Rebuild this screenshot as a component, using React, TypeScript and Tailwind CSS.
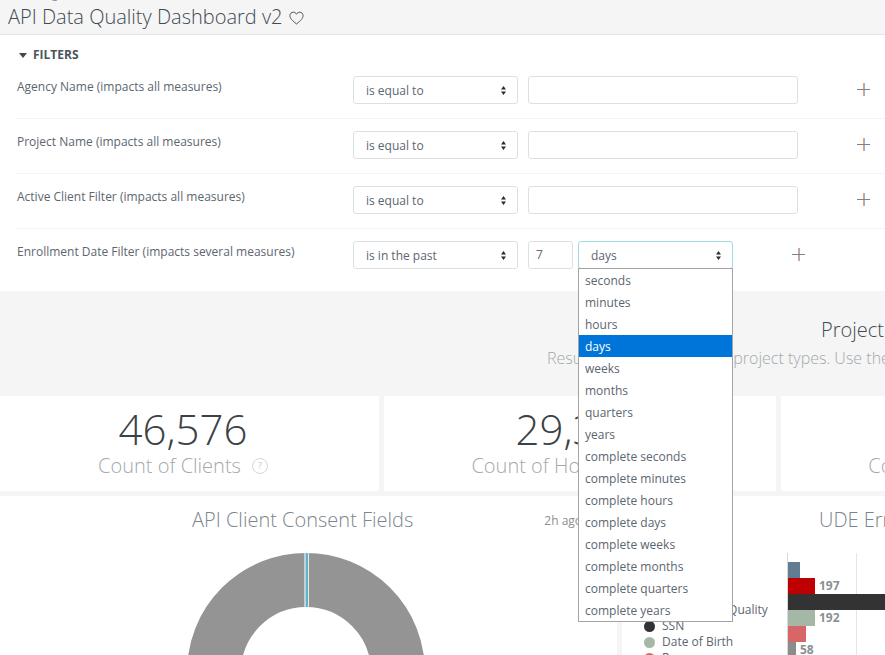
const units = [
  "seconds",
  "minutes",
  "hours",
  "days",
  "weeks",
  "months",
  "quarters",
  "years",
  "complete seconds",
  "complete minutes",
  "complete hours",
  "complete days",
  "complete weeks",
  "complete months",
  "complete quarters",
  "complete years",
];

function Carets() {
  return (
    <svg width="5" height="9" viewBox="0 0 5 9" className="shrink-0 text-[#262d33]">
      <path d="M2.5 0 L5 3.5 L0 3.5 Z M2.5 9 L5 5.5 L0 5.5 Z" fill="currentColor" />
    </svg>
  );
}

function PlusIcon() {
  return (
    <svg width="13" height="13" viewBox="0 0 13 13" className="block">
      <rect x="6" y="0" width="1" height="13" fill="#e9a077" />
      <rect x="7" y="0" width="1" height="13" fill="#93b4d8" />
      <rect x="0" y="6" width="13" height="1" fill="#7d8288" />
    </svg>
  );
}

function SelectBox({ label, className }: { label: string; className: string }) {
  return (
    <div className={`h-7 flex items-center justify-between pl-3 pr-[11px] bg-white rounded-[3px] border text-xs text-[#5c6670] ${className}`}>
      <span className="mt-[1px]">{label}</span>
      <Carets />
    </div>
  );
}

function FilterRow({ label }: { label: string }) {
  return (
    <div className="h-[55px] ml-[15px] pt-[12px] flex border-b border-[#f2f3f4]">
      <div className="w-[338px] pl-[2px] pt-[3px] text-xs leading-4 text-[#5c6670]">{label}</div>
      <SelectBox label="is equal to" className="w-[165px] border-[#dedfe0]" />
      <div className="w-[270px] h-7 ml-[10px] bg-white rounded-[3px] border border-[#dedfe0]" />
      <div className="ml-[59px] pt-[7px]">
        <PlusIcon />
      </div>
    </div>
  );
}

function KpiTile({ value, label }: { value: string; label: string }) {
  return (
    <div className="h-[95px] w-[392px] bg-white shrink-0 flex flex-col items-center pt-[6px]">
      <div className="text-[42px] leading-[54px] font-light text-[#3a4245]">{value}</div>
      <div className="-mt-[4px] flex items-center gap-[11px] text-xl leading-[27px] font-light text-[#a3a9ad]">
        <span>{label}</span>
        <span className="w-4 h-4 rounded-full border border-[#d3d6d8] flex items-center justify-center text-[9px] font-normal text-[#c4c8cb]">
          ?
        </span>
      </div>
    </div>
  );
}

function LegendItem({ label, color }: { label: string; color: string }) {
  return (
    <div className="h-4 flex items-center gap-[7px] text-xs text-[#5c6670] whitespace-nowrap">
      <span className={`w-[11px] h-[11px] rounded-full shrink-0 ${color}`} />
      {label}
    </div>
  );
}

function Bar({ width, color, value }: { width: string; color: string; value?: string }) {
  return (
    <div className="h-4 flex items-center">
      <div className={`h-4 shrink-0 ${width} ${color}`} />
      {value && <span className="ml-[4px] text-xs font-bold text-[#8a9094]">{value}</span>}
    </div>
  );
}

export default function App() {
  return (
    <div className="relative w-[885px] h-[655px] overflow-hidden bg-[#f5f5f5] font-['Open_Sans',sans-serif]">
      <header className="h-[35px] overflow-hidden border-b border-[#e4e5e6] flex flex-col justify-end pl-2">
        <div className="pl-[3px] text-xs leading-4 text-[#8a9094] shrink-0">Tracking</div>
        <div className="flex items-center gap-[6px] h-[30px] mb-[2px] shrink-0 text-xl font-light text-[#3f4a52]">
          API Data Quality Dashboard v2
          <svg width="15" height="14" viewBox="0 0 24 22" className="mt-[1px]">
            <path
              d="M12 20.5 C5 15 1.5 11.5 1.5 7.2 C1.5 4 4 1.7 6.9 1.7 C9 1.7 11 2.9 12 5 C13 2.9 15 1.7 17.1 1.7 C20 1.7 22.5 4 22.5 7.2 C22.5 11.5 19 15 12 20.5 Z"
              fill="none"
              stroke="currentColor"
              strokeWidth="1.5"
            />
          </svg>
        </div>
      </header>

      <section className="h-[256px] bg-white">
        <div className="h-[29px] pb-[1px] flex items-end pl-[19px] gap-[6px]">
          <svg width="8" height="5" viewBox="0 0 8 5" className="mb-[5px] text-[#3f4a52]">
            <path d="M0 0 H8 L4 5 Z" fill="currentColor" />
          </svg>
          <span className="text-xs leading-4 font-bold text-[#4a545c]">FILTERS</span>
        </div>
        <FilterRow label="Agency Name (impacts all measures)" />
        <FilterRow label="Project Name (impacts all measures)" />
        <FilterRow label="Active Client Filter (impacts all measures)" />
        <div className="ml-[15px] pt-[12px] flex">
          <div className="w-[338px] pl-[2px] pt-[3px] text-xs leading-4 text-[#5c6670]">
            Enrollment Date Filter (impacts several measures)
          </div>
          <SelectBox label="is in the past" className="w-[165px] border-[#dedfe0]" />
          <div className="w-[45px] h-7 ml-[10px] pl-[7px] flex items-center bg-white rounded-[3px] border border-[#dedfe0] text-xs text-[#5c6670]">
            7
          </div>
          <SelectBox label="days" className="w-[155px] ml-[5px] border-[#9fdbe3]" />
          <div className="ml-[59px] pt-[7px]">
            <PlusIcon />
          </div>
        </div>
      </section>

      <section className="h-[105px] pt-[25px] whitespace-nowrap">
        <div className="pl-[821px] text-xl leading-[27px] font-light text-[#3f4a52]">Project Overview</div>
        <div className="pl-[547px] mt-[4px] text-base leading-[22px] font-light text-[#a3a9ad]">
          Results from the selected project types. Use the filters
        </div>
      </section>

      <div className="flex gap-[5px] w-[1300px] -ml-[13px]">
        <KpiTile value="46,576" label="Count of Clients" />
        <KpiTile value="29,310" label="Count of Households" />
        <KpiTile value="18,204" label="Count of Enrollments" />
      </div>

      <div className="flex gap-[5px] mt-[5px] w-[1200px]">
        <div className="w-[617px] h-[200px] shrink-0 bg-white overflow-hidden">
          <div className="h-[50px] pl-[192px] pt-[10px] flex whitespace-nowrap">
            <span className="text-xl leading-[27px] font-light text-[#7c858c]">API Client Consent Fields</span>
            <span className="ml-[131px] mt-[7px] text-xs leading-4 text-[#8a9094]">2h ago</span>
          </div>
          <svg width="240" height="150" viewBox="0 0 240 150" className="ml-[186px] mt-[7px]">
            <circle cx="120" cy="119" r="92" fill="none" stroke="#949494" strokeWidth="54" />
            <rect x="119" y="0" width="3" height="54" fill="#62b2c9" />
            <rect x="118.5" y="0" width="1" height="54" fill="#ffffff" />
            <rect x="122" y="0" width="0.8" height="54" fill="#ffffff" />
          </svg>
        </div>
        <div className="w-[500px] h-[200px] shrink-0 bg-white overflow-hidden">
          <div className="h-[57px] pl-[197px] pt-[10px] text-xl leading-[27px] font-light text-[#7c858c] whitespace-nowrap">
            UDE Errors by Field
          </div>
          <div className="flex">
            <div className="w-[165px] pl-[22px] pt-[1px]">
              <LegendItem label="Name" color="bg-[#627d91]" />
              <LegendItem label="Last Name" color="bg-[#bf0000]" />
              <LegendItem label="First Name" color="bg-[#333333]" />
              <LegendItem label="Name Data Quality" color="bg-[#bf0000]" />
              <LegendItem label="SSN" color="bg-[#333333]" />
              <LegendItem label="Date of Birth" color="bg-[#a5b8a6]" />
              <LegendItem label="Race" color="bg-[#d96666]" />
            </div>
            <div className="relative w-[335px] h-[110px] border-l border-[#d5d9dc] pt-[9px]">
              <div className="absolute left-[68px] top-0 bottom-0 w-px bg-[#e4e6e8]" />
              <div className="relative">
                <Bar width="w-3" color="bg-[#627d91]" />
                <Bar width="w-[27px]" color="bg-[#bf0000]" value="197" />
                <Bar width="w-[200px]" color="bg-[#333333]" />
                <Bar width="w-[27px]" color="bg-[#a5b8a6]" value="192" />
                <Bar width="w-[18px]" color="bg-[#d96666]" />
                <Bar width="w-2" color="bg-[#8c8c8c]" value="58" />
              </div>
            </div>
          </div>
        </div>
      </div>

      <ul className="absolute left-[578px] top-[268px] w-[155px] bg-white border border-[#a3a3a3] text-xs text-[#5c6670]">
        {units.map((unit) => (
          <li
            key={unit}
            className={`h-[22px] pl-[6px] leading-[24px] ${unit === "days" ? "bg-[#0075d9] text-white" : ""}`}
          >
            {unit}
          </li>
        ))}
      </ul>
    </div>
  );
}
